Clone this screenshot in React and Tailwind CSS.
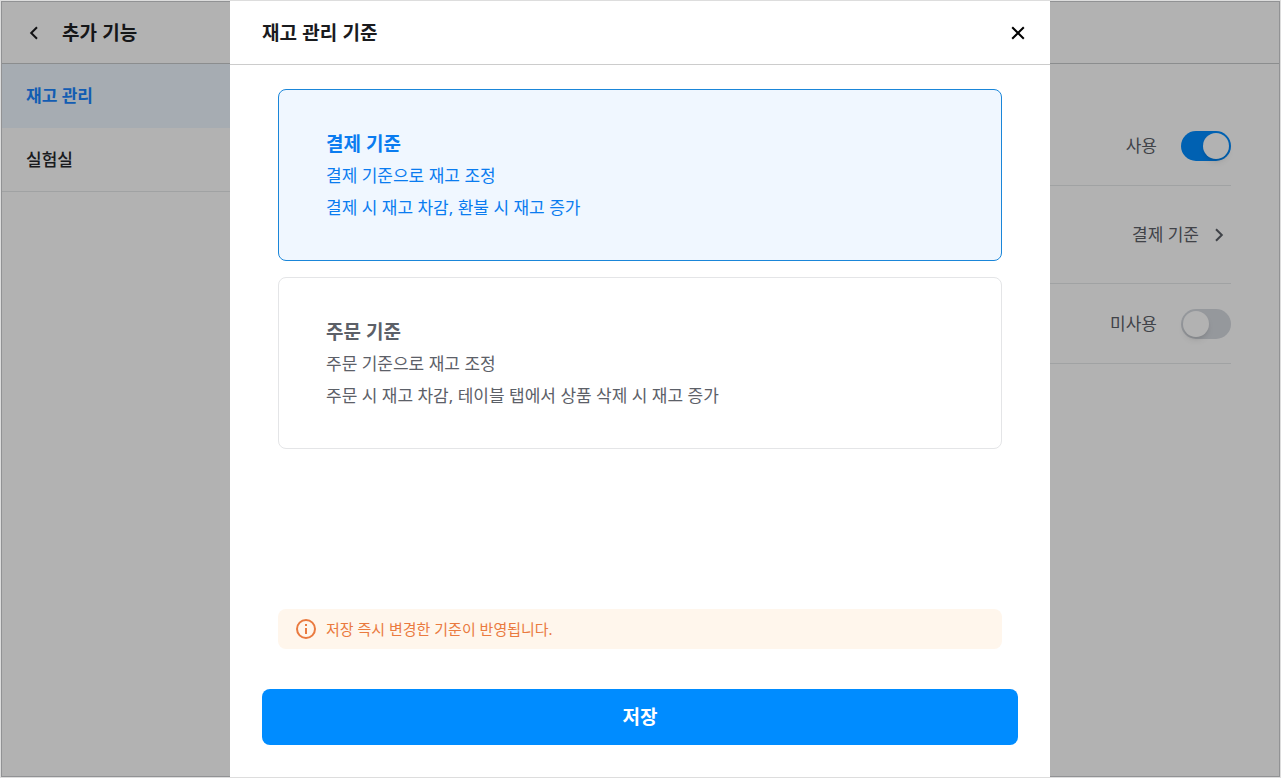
import React, { useState } from 'react';

const MENU = ['재고 관리', '실험실'];

const CRITERIA = [
  {
    id: 'payment',
    title: '결제 기준',
    lines: ['결제 기준으로 재고 조정', '결제 시 재고 차감, 환불 시 재고 증가'],
  },
  {
    id: 'order',
    title: '주문 기준',
    lines: ['주문 기준으로 재고 조정', '주문 시 재고 차감, 테이블 탭에서 상품 삭제 시 재고 증가'],
  },
];

function Icon({ children, className = '' }) {
  return (
    <svg viewBox="0 0 24 24" className={`size-6 shrink-0 ${className}`} fill="none" stroke="currentColor" strokeWidth="2" aria-hidden="true">
      {children}
    </svg>
  );
}

function ToggleRow({ label, checked, onChange }) {
  return (
    <div className="flex h-20 items-center justify-end border-b border-[#e6e8ea]">
      <label className="flex cursor-pointer items-center gap-6 text-[17px] text-[#5c6068]">
        {label}
        <input type="checkbox" role="switch" className="peer sr-only" checked={checked} onChange={(e) => onChange(e.target.checked)} />
        <span className="flex h-[30px] w-[50px] items-center rounded-full bg-[#d6dae0] p-0.5 peer-checked:justify-end peer-checked:bg-[#008cff]">
          <span className="size-[26px] rounded-full bg-white shadow-md"></span>
        </span>
      </label>
    </div>
  );
}

function SettingsPage({ criterion }) {
  const [stock, setStock] = useState(true);
  const [soldOut, setSoldOut] = useState(false);

  return (
    <div className="flex flex-1 flex-col border border-[#d0d2d4]">
      <header className="flex h-[62px] items-center gap-4 border-b border-[#c8cacc] pl-5">
        <button type="button" aria-label="뒤로" className="text-[#1a1b1e]">
          <Icon><path d="M15 6.2L9.2 12l5.8 5.8" /></Icon>
        </button>
        <h1 className="font-['Noto_Sans_CJK_KR',sans-serif] text-[19px] font-semibold text-[#1f2125]">추가 기능</h1>
      </header>

      <div className="flex flex-1">
        <nav className="w-80 shrink-0">
          {MENU.map((item, i) => (
            <a
              key={item}
              href="#"
              className={`flex h-16 items-center border-b pl-6 text-[17px] ${i === 0 ? 'border-[#eef7ff] bg-[#eef7ff] font-bold text-[#1a86ff]' : 'border-[#e6e8ea] font-medium text-[#26282c]'}`}
            >
              {item}
            </a>
          ))}
        </nav>

        <main className="flex-1 pt-[42px] pr-12">
          <ToggleRow label={stock ? '사용' : '미사용'} checked={stock} onChange={setStock} />
          <div className="flex h-[98px] items-center justify-end border-b border-[#e6e8ea]">
            <button type="button" className="flex items-center gap-2 text-[17px] text-[#5c6068]">
              {criterion.title}
              <Icon><path d="M9 6.2l5.8 5.8L9 17.8" /></Icon>
            </button>
          </div>
          <ToggleRow label={soldOut ? '사용' : '미사용'} checked={soldOut} onChange={setSoldOut} />
        </main>
      </div>
    </div>
  );
}

function CriterionCard({ item, checked, onSelect }) {
  return (
    <label
      className={`block cursor-pointer rounded-lg border px-[47px] pt-[38px] pb-9 ${checked ? 'border-[#1a86d9] bg-[#f0f7ff] text-[#0a7cf0]' : 'border-[#e4e5e7] bg-white text-[#5c6068]'}`}
    >
      <input type="radio" name="criterion" className="sr-only" checked={checked} onChange={() => onSelect(item.id)} />
      <span className="block text-[19px] leading-8 font-semibold">{item.title}</span>
      {item.lines.map((line) => (
        <span key={line} className="block text-[17px] leading-8">{line}</span>
      ))}
    </label>
  );
}

export default function App() {
  const [selected, setSelected] = useState('payment');
  const current = CRITERIA.find((c) => c.id === selected);

  return (
    <div className="relative flex min-h-screen flex-col border border-[#dddddd] bg-white font-['Noto_Sans','Noto_Sans_CJK_KR',sans-serif]" lang="ko">
      <SettingsPage criterion={current} />

      <div className="absolute inset-0 flex justify-center bg-black/30 pr-px">
        <section role="dialog" aria-modal="true" aria-labelledby="dialog-title" className="flex w-full max-w-[820px] flex-col bg-white">
          <header className="flex h-16 items-center justify-between border-b border-[#cccccc] pr-5 pl-8">
            <h2 id="dialog-title" className="font-['Noto_Sans_CJK_KR',sans-serif] text-[19px] font-semibold text-[#1a1b1e]">재고 관리 기준</h2>
            <button type="button" aria-label="닫기" className="text-black">
              <Icon><path d="M6.2 6.2l11.6 11.6M17.8 6.2L6.2 17.8" /></Icon>
            </button>
          </header>

          <div className="flex flex-1 flex-col px-12 pt-6 pb-10">
            <div className="flex flex-col gap-4">
              {CRITERIA.map((item) => (
                <CriterionCard key={item.id} item={item} checked={item.id === selected} onSelect={setSelected} />
              ))}
            </div>
            <p className="mt-auto flex h-10 items-center gap-2 rounded-lg bg-[#fff6ec] pl-4 text-[15px] text-[#ea7a3f]">
              <Icon>
                <circle cx="12" cy="12" r="9" />
                <path d="M12 7v2M12 11v6" />
              </Icon>
              저장 즉시 변경한 기준이 반영됩니다.
            </p>
          </div>

          <div className="px-8 pb-8">
            <button type="button" className="h-14 w-full rounded-lg bg-[#008cff] text-[19px] font-semibold text-white">
              저장
            </button>
          </div>
        </section>
      </div>
    </div>
  );
}
